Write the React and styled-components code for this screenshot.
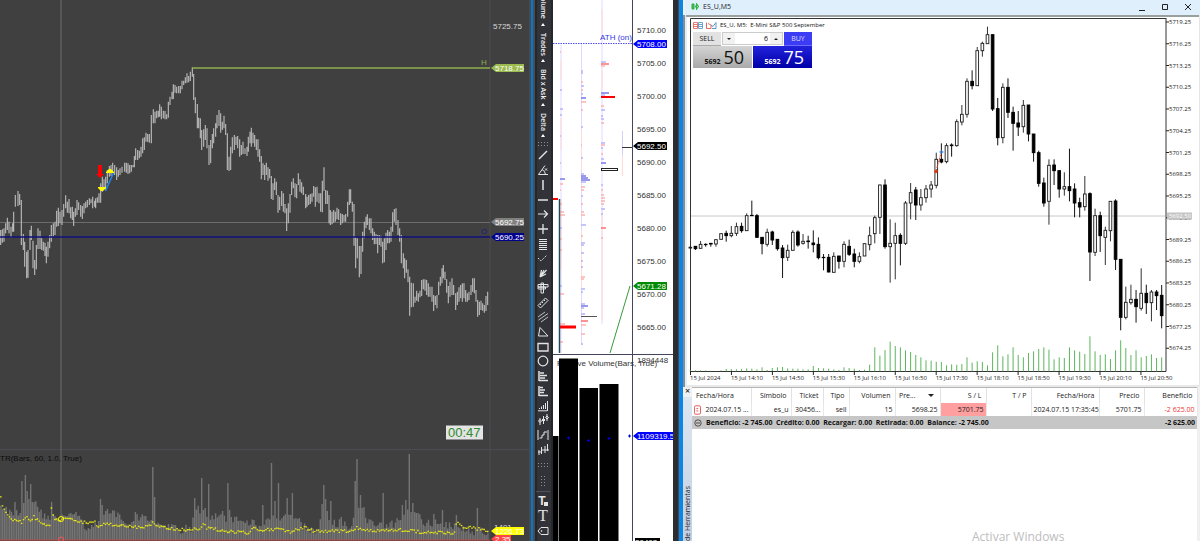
import React from "react";
import styled, { createGlobalStyle, css } from "styled-components";

const sans = `"Liberation Sans", Arial, sans-serif`;
const ui = `"Open Sans", "Noto Sans", sans-serif`;

const GlobalStyle = createGlobalStyle`
  * { box-sizing: border-box; }
  body { margin: 0; background: #404040; overflow: hidden; font-family: ${ui}; }
  button, input { font: inherit; color: inherit; margin: 0; padding: 0; border: 0; background: none; }
`;

/* ---------- data ---------- */

// [x, high, low], three units per pixel, origin at the top of the plot
const BARS_A = [[2,540,585],[7,538,578],[12,535,575],[17,520,550],[22,503,540],[27,515,550],[33,530,563],[38,520,545],[41,485,545],[46,435,470],[54,423,468],[59,432,465],[64,450,585],[70,552,600],[74,575,650],[80,605,685],[84,600,683],[90,540,600],[94,527,570],[99,572,655],[104,630,675],[109,585,658],[114,535,597],[120,542,597],[125,565,600],[130,575,602],[135,578,618],[139,590,640],[144,575,620],[149,555,595],[154,525,575],[160,520,560],[165,515,555],[170,482,530],[175,473,528],[180,485,520],[186,480,525],[191,462,500],[197,436,475],[202,455,488],[207,447,490],[212,472,505],[217,470,510],[221,485,528],[226,475,500],[231,450,495],[236,457,480],[242,465,500],[247,468,507],[252,460,490],[257,455,475],[262,450,472],[268,445,465],[273,448,460],[278,440,475],[284,452,470],[287,445,475],[292,442,458],[297,430,458],[302,400,458],[307,380,425],[312,388,415],[317,380,420],[322,360,400],[328,348,380],[333,345,378],[338,338,370],[344,345,375],[350,352,390],[355,360,380],[360,355,375],[366,350,368],[374,338,365],[379,338,368],[384,340,372],[389,345,370],[394,345,365],[399,345,352],[403,318,352],[407,295,330],[413,300,330],[418,302,325],[423,290,320],[428,265,310],[433,262,300],[438,248,275],[443,252,275],[448,252,278],[454,195,280],[460,178,220],[465,185,220],[470,182,205],[475,182,202],[479,163,200],[484,170,208],[490,182,205],[495,183,208],[500,193,208],[505,155,203],[510,140,165],[516,125,148],[520,103,147],[525,105,128],[530,110,130],[536,108,130],[541,108,130],[546,92,118],[551,92,105],[556,82,100],[561,70,98],[566,78,97],[571,65,93],[577,52,80],[581,72,150],[586,142,190],[592,162,235],[596,203,235],[601,205,265],[605,240,300],[611,238,290],[616,225,270],[621,235,295],[627,285,345],[632,270,340],[637,252,295],[641,235,280],[647,220,260],[651,195,235],[657,180,228],[662,190,248],[667,215,240],[672,197,235],[677,222,255],[682,250,360],[687,320,363],[692,290,360],[697,262,310],[703,255,300],[708,260,285],[713,258,295],[719,268,320],[724,285,315],[729,275,312],[735,295,312],[741,290,318],[745,260,305],[750,245,280],[754,233,290],[759,248,280],[764,255,290],[769,268,300],[774,268,320],[779,298,335],[784,318,388]];
const BARS_B = [[9,340,372],[14,345,390],[19,338,375],[24,352,392],[29,357,385],[34,378,447],[39,400,450],[44,385,420],[49,395,435],[54,435,488],[59,440,480],[65,423,468],[70,430,485],[75,462,490],[80,475,543],[85,460,520],[90,432,488],[95,395,435],[100,385,415],[105,400,442],[110,403,445],[115,370,405],[120,388,425],[125,397,430],[130,410,435],[137,432,475],[141,440,470],[146,435,465],[151,432,462],[156,430,455],[161,408,440],[166,412,470],[171,410,455],[177,430,460],[182,430,485],[187,392,487],[192,352,422],[197,420,462],[202,422,462],[207,435,520],[211,480,525],[216,485,523],[221,480,518],[226,485,515],[231,473,508],[236,478,510],[242,490,525],[247,492,520],[252,495,515],[257,492,515],[263,455,500],[268,418,465],[272,418,460],[277,455,485],[282,462,587],[287,562,655],[292,565,625],[298,588,682],[303,588,672],[308,545,605],[313,515,565],[318,500,535],[322,493,525],[328,505,540],[333,505,550],[338,535,570],[343,545,583],[348,552,582],[353,555,610],[358,555,585],[363,557,590],[368,575,640],[373,565,637],[378,548,600],[383,540,580],[388,545,580],[393,530,575],[398,487,545],[403,477,515],[408,475,525],[414,510,555],[419,535,575],[424,555,640],[430,610,655],[434,625,685],[439,630,668],[444,658,697],[449,680,797],[454,698,772],[460,700,770],[465,740,758],[470,722,752],[475,730,755],[480,722,742],[485,690,738],[490,688,718],[495,688,722],[500,690,735],[505,700,740],[510,710,740],[516,710,755],[521,735,783],[526,738,765],[531,735,775],[536,695,735],[541,680,707],[546,655,700],[550,645,685],[555,665,690],[560,688,728],[565,708,760],[570,695,740],[576,685,735],[581,705,735],[587,730,780],[592,725,765],[597,712,755],[602,705,745],[607,700,755],[612,700,745],[617,720,755],[622,730,755],[627,725,750],[633,705,735],[638,685,725],[643,685,730],[648,720,755],[653,750,800],[658,755,795],[663,752,780],[668,760,782],[673,765,788],[678,738,783],[683,725,765]];
const PRICE_BARS = [...BARS_A, [789,345,375], ...BARS_B.map(([x, h, l]) => [x + 780, h, l])].sort((a, b) => a[0] - b[0]);
const pricePath = PRICE_BARS.map(([x, h, l]) => `M${x} ${h}V${l}`).join("");

const lerp = (pts, x) => {
  for (let i = 1; i < pts.length; i++) {
    if (x <= pts[i][0]) {
      const [x0, y0] = pts[i - 1];
      const [x1, y1] = pts[i];
      return y0 + ((y1 - y0) * (x - x0)) / (x1 - x0);
    }
  }
  return pts[pts.length - 1][1];
};
const noise = (i) => {
  const v = Math.sin(i * 127.1 + 11.7) * 43758.5453;
  return v - Math.floor(v) - 0.5;
};

const VOL_BASE = [[0,500],[2,507],[8,512],[20,512],[22,500],[33,501],[45,517],[60,518],[75,514],[85,526],[98,526],[103,512],[115,514],[130,528],[136,516],[145,519],[160,522],[180,530],[192,528],[195,503],[200,510],[210,518],[225,517],[235,519],[245,526],[252,522],[260,528],[270,518],[280,520],[290,512],[300,526],[318,530],[324,508],[332,522],[350,526],[362,506],[368,520],[380,526],[395,524],[405,512],[416,514],[425,524],[440,524],[455,528],[470,532],[489,532]];
const VOL_SPIKES = [[0,483],[15,502],[22,481],[25,475],[27,491],[30,484],[51,502],[101,499],[103,505],[136,512],[146,516],[152,467],[154,497],[194,498],[202,478],[205,508],[209,484],[222,511],[228,483],[230,510],[262,505],[272,463],[275,501],[278,483],[287,498],[292,493],[299,518],[322,504],[324,485],[326,499],[330,501],[341,517],[355,481],[357,459],[360,495],[363,508],[383,493],[402,505],[405,500],[410,454],[412,503],[417,513],[434,514],[443,510],[456,515],[478,508]];
const volPath = Array.from({ length: 280 }, (_, i) => {
  const x = 1 + i * 1.745;
  const spike = VOL_SPIKES.find(([sx]) => Math.abs(sx - x) < 0.88);
  const y = spike ? spike[1] : lerp(VOL_BASE, x) + noise(i) * 9;
  return `M${x.toFixed(1)} 540V${y.toFixed(1)}`;
}).join("");

const AVG = [[0,498],[2,506],[5,513],[12,520],[22,522],[25,516],[30,521],[33,517],[40,522],[49,527],[50,504],[53,519],[60,520],[66,517],[72,519],[85,523],[94,521],[96,527],[104,524],[115,525],[135,527],[150,526],[152,521],[158,527],[185,530],[200,529],[202,523],[206,528],[225,531],[249,533],[253,527],[260,530],[280,529],[290,532],[304,527],[312,531],[350,531],[356,528],[375,531],[400,530],[420,532],[454,533],[456,522],[462,527],[480,529],[489,531]];
const avgPath = Array.from({ length: 280 }, (_, i) => {
  const x = i * 1.745;
  return `M${x.toFixed(1)} ${(lerp(AVG, x) + noise(i + 900) * 3).toFixed(1)}h1.6`;
}).join("");

// [wickTop, bodyTop, bodyBottom, wickBottom, filled], three units per pixel
const CANDLES = [[198,202,204,206,0],[198,199,206,210,1],[183,193,205,206,0],[190,193,194,200,1],[190,190,192,200,1],[178,179,192,200,0],[160,161,178,179,0],[152,160,167,185,1],[138,160,167,172,0],[128,140,160,168,0],[128,139,152,158,1],[100,107,152,152,0],[62,106,107,107,1],[102,107,172,173,1],[172,172,191,223,1],[146,157,193,200,0],[152,156,180,195,1],[178,178,206,212,1],[195,204,233,294,1],[194,211,232,243,0],[151,157,211,211,0],[151,156,195,200,1],[162,184,190,194,0],[167,183,185,206,1],[151,189,194,217,1],[172,193,233,238,1],[222,232,233,271,1],[222,232,276,277,1],[217,229,277,277,0],[228,228,244,266,1],[184,193,244,262,0],[179,199,223,228,1],[206,222,244,262,1],[217,230,244,250,0],[190,191,228,228,0],[140,167,194,211,0],[107,113,161,190,0],[14,15,112,162,0],[-2,15,200,206,1],[118,190,200,308,0],[128,167,190,298,0],[160,166,190,256,1],[63,69,190,195,0],[9,38,69,118,0],[21,30,75,120,1],[27,53,75,92,0],[15,27,53,68,0],[3,15,27,53,0],[-82,-62,16,25,0],[-110,-62,-54,-50,1],[-110,-103,-55,-50,0],[-110,-105,-103,-70,1],[-182,-175,-103,-100,0],[-225,-197,-174,-164,0],[-305,-296,-197,-187,0],[-329,-296,-283,-272,1],[-399,-388,-283,-283,0],[-415,-410,-388,-370,0],[-460,-436,-409,-409,0],[-436,-436,-213,-207,1],[-246,-214,-127,-104,1],[-290,-278,-127,-110,0],[-305,-278,-203,-186,1],[-220,-203,-170,-88,1],[-207,-171,-159,-132,1],[-240,-224,-160,-142,0],[-225,-225,-138,-116,1],[-138,-138,-82,-55,1],[-88,-82,10,20,1],[-7,9,69,80,1],[-62,-44,64,134,0],[-62,-45,-28,15,1],[-30,-28,27,53,1],[-23,20,27,47,0],[-94,20,32,64,1],[10,27,69,112,1],[53,68,81,112,1],[-12,42,80,92,0],[37,41,216,303,1],[86,107,217,228,0],[95,107,167,216,1],[140,151,172,255,0],[64,64,152,184,0],[58,63,238,270,1],[238,238,412,451,1],[320,367,412,418,0],[314,358,368,374,0],[330,358,380,428,1],[265,340,385,392,0],[314,340,368,402,1],[330,336,368,424,0],[330,336,347,390,1],[315,346,407,445,1]];
const VOLUMES = [571,571,571,571,573,573,571,567,567,568,567,565,566,568,562,570,564,562,561,565,566,566,568,568,558,564,565,566,568,570,562,564,566,570,569,554,502,527,510,485,498,502,511,516,525,532,541,542,545,546,556,553,554,552,532,548,544,546,556,517,496,529,523,502,525,532,519,514,507,502,509,538,532,534,502,511,515,522,469,514,525,523,537,511,481,504,525,511,532,528,523,534,532];
const candleX = (i) => 31 + i * 15.37;

const RIGHT_AXIS = ["5719.25","5716.25","5713.25","5710.25","5707.25","5704.25","5701.25","5698.25","5695.25","5692.25","5689.25","5686.25","5683.25","5680.25","5677.25","5674.25"];
const TIME_AXIS = ["15 Jul 2024","15 Jul 14:10","15 Jul 14:50","15 Jul 15:30","15 Jul 16:10","15 Jul 16:50","15 Jul 17:30","15 Jul 18:10","15 Jul 18:50","15 Jul 19:30","15 Jul 20:10","15 Jul 20:50"];
const MID_AXIS = [["5710.00",30],["5705.00",63],["5700.00",96],["5695.00",129],["5690.00",162],["5685.00",195],["5680.00",228],["5675.00",261],["5670.00",294],["5665.00",327]];

// footprint rows: [column x, y, length, colour, thickness]
const RED = "#ffb0b0";
const BLUE = "#b4b4ff";
const PROFILE = [
  [601,62,5,BLUE],[601,64,8,"#ff7070"],[601,66,4,RED],[601,93,8,"#7a7ae8"],[601,95,4,BLUE],[601,97,14,"#f00",2],
  [601,106,3,RED],[601,110,4,BLUE],[601,116,2,BLUE],[601,119,3,BLUE],[601,123,3,RED],[601,143,4,BLUE],[601,145,4,RED],[601,148,2,BLUE],[601,154,2,RED],[601,159,3,BLUE],[601,163,5,"#7a7ae8"],
  [601,185,2,BLUE],[601,190,2,RED],[601,195,3,RED],[601,198,4,RED],[601,201,4,RED],[601,204,3,RED],[601,209,4,BLUE],[601,214,2,BLUE],[601,228,5,"#ff7070"],[601,238,2,RED],
  [581,71,2,BLUE],[581,73,2,BLUE],[581,82,2,RED],[581,86,3,BLUE],[581,90,2,RED],[581,94,2,BLUE],[581,98,5,"#7a7ae8"],[581,102,5,RED],[581,110,2,RED],[581,127,2,BLUE],[581,145,1,RED],[581,158,2,BLUE],[581,174,3,BLUE],[581,176,5,"#7a7ae8"],[581,178,7,"#7a7ae8"],[581,180,9,"#7a7ae8"],[581,182,5,BLUE],[581,187,4,RED],[581,190,3,RED],[581,196,2,BLUE],[581,204,2,RED],[581,212,3,RED],[581,215,4,RED],[581,225,5,BLUE],[581,236,2,RED],[581,243,4,BLUE],[581,245,3,BLUE],[581,253,3,BLUE],[581,261,2,BLUE],[581,267,2,BLUE],[581,277,4,RED],[581,279,3,RED],[581,289,4,BLUE],[581,292,2,BLUE],[581,304,4,BLUE],[581,306,7,"#7a7ae8"],[581,308,3,BLUE],[581,314,4,BLUE],[581,321,7,"#ff7070"],[581,325,5,RED],[581,334,4,RED],[581,344,2,BLUE],
  [560,52,1,RED],[560,90,2,BLUE],[560,109,3,BLUE],[560,115,2,BLUE],[560,136,1,BLUE],[560,163,1,BLUE],[560,179,5,"#7a7ae8"],[560,184,3,RED],[560,190,1,RED],[560,204,2,RED],[560,212,4,RED],[560,215,5,RED],[560,228,2,BLUE],[560,239,2,RED],[560,250,2,RED],[560,286,2,BLUE],[560,294,4,RED],[560,324,5,RED],[560,327,16,"#f00",3],[560,342,3,RED],
];

/* ---------- shared pieces ---------- */

const ChartSvg = styled.svg`
  display: block;
  width: 100%;
  height: auto;
  font-family: ${(p) => (p.$ui ? ui : sans)};
  font-size: ${(p) => (p.$ui ? 6 : 8)}px;
`;

function PriceTag({ x, y, width, fill, children }) {
  return (
    <g>
      <path d={`M${x} ${y}l5 -4h${width - 5}v8h${5 - width}z`} fill={fill} />
      <text x={x + 4} y={y + 3} fill="#fff">{children}</text>
    </g>
  );
}

/* ---------- layout ---------- */

const Desktop = styled.main`
  display: grid;
  grid-template-columns: minmax(0, 531fr) 22px minmax(0, 120fr) 10px minmax(0, 517fr);
  min-height: 100vh;
`;
const DarkPane = styled.section`
  background: #404040;
  overflow: hidden;
  height: 100vh;
`;
const WhitePane = styled(DarkPane)`
  background: #fff;
`;
const WindowEdge = styled.div`
  background: linear-gradient(to right, #2d2d2f 0 5px, #45484d 5px 6px, #0c86e4 6px 10px);
`;
const Rail = styled.nav`
  display: flex;
  flex-direction: column;
  align-items: center;
  height: 100vh;
  overflow: hidden;
  border-left: 2px solid #0078d7;
  background: linear-gradient(to right, #4a4c50 0 2px, #26272a 2px 4px, #313338 4px 18px, #26272a 18px);
`;
const MenuButton = styled.button`
  writing-mode: vertical-rl;
  display: flex;
  align-items: center;
  justify-content: space-between;
  height: ${(p) => p.$h}px;
  padding: 4px 0 3px;
  flex: none;
  color: #eee;
  font-size: 7px;
  font-weight: 600;
  line-height: 14px;
  white-space: nowrap;
  ${(p) => p.$cut && css`justify-content: flex-end; gap: 4px;`}
`;
const Caret = styled.i`
  width: 0;
  height: 0;
  border: 2px solid transparent;
  border-bottom: 3px solid #fff;
  border-top: 0;
`;
const ToolList = styled.div`
  display: flex;
  flex-direction: column;
  flex: none;
  height: 309px;
`;
const ToolButton = styled.button`
  display: grid;
  place-items: center;
  width: 14px;
  min-height: 14px;
  flex: 1 0 14px;
  color: #e4e4e4;
`;
const TextTools = styled(ToolList)`
  height: 44px;
`;
const RailDivider = styled.hr`
  width: 14px;
  margin: 2px 0;
  border: 0;
  border-top: 1px solid #50525a;
  flex: none;
`;
const Grip = styled.div`
  width: ${(p) => (p.$tall ? 6 : 12)}px;
  height: ${(p) => (p.$tall ? 12 : 6)}px;
  margin: ${(p) => p.$m}px 0;
  flex: none;
  background: radial-gradient(circle, #8b8d92 1px, transparent 1px) 0 0 / 3px 3px;
`;

const TOOLS = {
  line: <path d="M2 10L10 2" strokeWidth="1.5" />,
  angle: <path d="M1.5 10.5H11M1.5 10.5L8 1.5M5 5.5a6 6 0 0 1 3.5 5M8 4.5l2 2m0-2l-2 2" />,
  vline: <path d="M6 1v10" strokeWidth="1.5" />,
  hline: <path d="M1 6h10" strokeWidth="1.5" />,
  arrow: <path d="M1 6h10M7 2.5L10.5 6 7 9.5" strokeWidth="1.2" />,
  cross: <path d="M6 1v10M1 6h10" strokeWidth="1.3" />,
  levels: <path d="M2 1.5h8M2 3.5h8M2 5.5h8M2 7.5h8M2 9.5h8M2 11.5h8" strokeWidth="1.1" />,
  path: <path d="M1 6l3 3 6-6" strokeDasharray="1.5 1" />,
  fork: <path d="M3 10L9.5 3M3 10l1.500-7M3 10L9 7M4 8l3-5" strokeWidth="1.2" />,
  profile: <path d="M1 2.5h10v2.500H1zM1 5h7.500v2H1zM4 1v10h2.500V1z" />,
  ruler: <path d="M1 8.5L8.5 1 11 3.5 3.5 11zM3 7l1 1M5 5l1 1M7 3l1 1" />,
  hatch: <path d="M1 6L8 1M1.5 9L11 2.5M4 11l7-5" strokeWidth=".8" />,
  triangle: <path d="M3 1.5L11 10H1.5z" />,
  rect: <path d="M1 2.5h10v7.5H1z" strokeWidth="1.3" />,
  circle: <circle cx="6" cy="6" r="4.8" strokeWidth="1.2" />,
  prof1: <path d="M2 1v10M3 3h4M3 5.5h7M3 8h5M2 10.5h9" strokeWidth="1.5" />,
  prof2: <path d="M2 1v10M3 2.5h3M3 5h5M3 7.5h4M2 10.5h9" strokeWidth="1.5" />,
  prof3: <path d="M10.5 1v10M8.5 3v6M6.5 5v4M4.5 6.5v2.5M2.5 8v1M1 10.8h9" />,
  candles: <path d="M3 4v7M6.5 2v8M10 0v7M1.5 7l1.5-1.5L4.5 7 3 8.500zM5 6l1.5-1.5L8 6 6.5 7.5zM8.5 3.5L10 2l1.5 1.5L10 5z" />,
  steps: <path d="M1 1v10M11 1v10M2.5 9H5V6h2V3h3" />,
  ticks: <path d="M2 6v5M4.5 3v7M8 2v7M10.5 0v7M1 8h4M4 6h8" />,
};

const Glyph = ({ children }) => (
  <svg width="12" height="12" viewBox="0 0 12 12" fill="none" stroke="currentColor" aria-hidden="true">
    {children}
  </svg>
);

const TextGlyph = styled.span`
  font: 16px / 14px "Liberation Serif", serif;
`;
const LockedGlyph = styled.span`
  display: flex;
  align-items: flex-end;
  font: bold 12px / 13px ${sans};
`;
const Padlock = styled.i`
  width: 4px;
  height: 4px;
  margin: 0 0 2px -2px;
  background: currentColor;
`;

/* ---------- right terminal ---------- */

const Terminal = styled.section`
  display: flex;
  flex-direction: column;
  height: 100vh;
  background: #f0f0f0;
`;
const TitleBar = styled.header`
  display: flex;
  align-items: center;
  gap: 4px;
  height: 15px;
  flex: none;
  margin-left: 2px;
  padding: 0 7px 2px 6px;
  background: #dfeffc;
  color: #222;
  font-size: 7px;
  line-height: 12px;
`;
const WindowButtons = styled.div`
  display: flex;
  gap: 13px;
  margin: 1px 0 0 auto;
  color: #222;
`;
const WindowButton = styled.button`
  display: block;
  width: 10px;
  height: 10px;
  line-height: 0;
`;
const ChartFrame = styled.div`
  position: relative;
  flex: none;
  padding-left: 3px;
  background: linear-gradient(to right, #8b8b8b 0 2px, #dfeffc 2px 4px, #fff 4px);
`;
const ChartHeading = styled.div`
  position: absolute;
  top: 6px;
  left: 10px;
  display: flex;
  align-items: center;
  gap: 3px;
  color: #111;
  font-size: 6px;
  line-height: 9px;
  white-space: pre;
`;
const TradeBox = styled.div`
  position: absolute;
  top: 17px;
  left: 10px;
  display: grid;
  grid-template-columns: 59px 59px;
  grid-template-rows: 14px 22px;
  column-gap: 1px;
`;
const TopRow = styled.div`
  grid-column: 1 / 3;
  display: flex;
  min-width: 0;
`;
const SideButton = styled.button`
  width: 28px;
  height: 14px;
  flex: none;
  font-size: 7px;
  line-height: 13px;
  border-bottom: 1px solid ${(p) => (p.$buy ? "#6b6bff" : "#aaa")};
  background: ${(p) => (p.$buy ? "#3c3cf4" : "#e2e2e2")};
  color: ${(p) => (p.$buy ? "#dcdcff" : "#222")};
`;
const Stepper = styled.div`
  display: flex;
  flex: 1;
  min-width: 0;
  margin: 0 1px 1px;
  border: 1px solid #ccc;
  background: #fff;
`;
const StepButton = styled.button`
  display: grid;
  place-items: center;
  width: 12px;
  flex: none;
  background: #f1f1f1;
`;
const StepArrow = styled.i`
  border: 2px solid transparent;
  ${(p) => (p.$up ? css`border-bottom: 2px solid #222; border-top: 0;` : css`border-top: 2px solid #222; border-bottom: 0;`)}
`;
const LotInput = styled.input`
  flex: 1;
  width: 0;
  min-width: 0;
  padding-right: 2px;
  text-align: right;
  font-size: 7px;
`;
const QuoteButton = styled.button`
  display: flex;
  align-items: baseline;
  justify-content: flex-end;
  gap: 3px;
  padding-right: 8px;
  color: ${(p) => (p.$buy ? "#fff" : "#111")};
  background: ${(p) => (p.$buy ? "linear-gradient(#2222dc, #0000a8)" : "linear-gradient(#d4d4d4, #a9a9a9)")};
`;
const QuoteWhole = styled.b`
  font-size: 7px;
`;
const QuoteTicks = styled.span`
  font-size: 18px;
  line-height: 22px;
`;

const Toolbox = styled.div`
  display: flex;
  flex: 1;
  min-height: 0;
  padding-right: 3px;
`;
const ToolboxTab = styled.div`
  display: flex;
  flex-direction: column;
  justify-content: space-between;
  align-items: center;
  width: 9px;
  flex: none;
  background: linear-gradient(#f0f0f0 0 10px, #dce6f0 10px, #c2d0e2);
`;
const CloseButton = styled.button`
  height: 8px;
  font-size: 9px;
  line-height: 8px;
`;
const TabLabel = styled.span`
  writing-mode: vertical-rl;
  transform: rotate(180deg);
  font-size: 7px;
  line-height: 9px;
  color: #222;
  white-space: nowrap;
`;
const ToolboxBody = styled.div`
  position: relative;
  flex: 1;
  min-width: 0;
  background: #fff;
  border-top: 1px solid #b5b5b5;
`;
const Orders = styled.table`
  width: 100%;
  table-layout: fixed;
  border-collapse: collapse;
  font-size: 7px;
  line-height: 10px;
  color: #222;
`;
const HeadCell = styled.th`
  height: 15px;
  padding: 0 4px;
  font-weight: 400;
  text-align: ${(p) => (p.$left ? "left" : "right")};
  border-right: 1px solid #e2e2e2;
  white-space: nowrap;
`;
const Cell = styled.td`
  height: 13px;
  padding: 0 2px;
  text-align: ${(p) => (p.$left ? "left" : "right")};
  border-right: 1px solid #e8e8e8;
  white-space: nowrap;
  background: ${(p) => (p.$stop ? "#ff9f9f" : "transparent")};
  color: ${(p) => (p.$loss ? "#f03434" : "inherit")};
`;
const CellIcon = styled.span`
  display: flex;
  align-items: center;
  gap: 4px;
`;
const SortedHead = styled.span`
  display: flex;
  align-items: center;
  justify-content: flex-end;
  gap: 12px;
  padding-right: 2px;
`;
const SortMark = styled.i`
  border: 3px solid transparent;
  border-top: 3px solid #222;
  border-bottom: 0;
`;
const TotalCell = styled.td`
  height: 13px;
  padding: 0 2px;
  background: #c6c6c6;
  color: #111;
  font-weight: 700;
  text-align: ${(p) => (p.$right ? "right" : "left")};
  white-space: pre;
`;
const Watermark = styled.div`
  position: absolute;
  left: 280px;
  bottom: -4px;
  color: #bdbdbd;
  font-size: 12px;
  line-height: 16px;
`;

const COLUMNS = [["Fecha/Hora",59],["Símbolo",40],["Ticket",32],["Tipo",26],["Volumen",46],["Pre...",45],["S / L",46],["T / P",45],["Fecha/Hora",68],["Precio",45],["Beneficio",53]];

function PriceChart() {
  return (
    <DarkPane aria-label="Price chart">
      <ChartSvg viewBox="0 0 531 541">
        <rect width="531" height="541" fill="#404040" />
        <path d="M490 0V541M0 449.5H530" stroke="#4a4b54" fill="none" />
        <rect x="529" width="2" height="541" fill="#4a4a4a" />
        <path d={volPath} stroke="#747474" strokeWidth="1.4" />
        <path d="M61 0V541M0 222.5H490" stroke="#6c6c6c" />
        <g transform="translate(0 50) scale(.33333)">
          <path d={pricePath} stroke="#bababa" strokeWidth="3.4" />
        </g>
        <path d="M0 237H490" stroke="#10107c" strokeWidth="1.5" />
        <path d="M192 68H490" stroke="#8fae4c" strokeWidth="1.5" />
        <path d="M105.5 191L113.5 173" stroke="#1e86f0" strokeWidth="1.5" />
        <path d="M98 165h4v9h2l-4 4-4-4h2z" fill="#f00" />
        <path d="M98 187h8v1l-3 3h-2l-3-3zM106 173h8v-1l-3-3h-2l-3 3z" fill="#ff0" />
        <path d={avgPath} stroke="#e6e614" strokeWidth="1.3" />
        <path d="M0 540H490" stroke="#c04a4a" />
        <circle cx="61" cy="519" r="2.5" fill="none" stroke="#ff0" />
        <circle cx="61" cy="539.5" r="2.5" fill="none" stroke="#f55" />
        <text x="0" y="461" fill="#0c0c0c">TR(Bars, 60, 1.0, True)</text>
        <text x="481" y="65" fill="#8fae4c">H</text>
        <text x="481" y="234" fill="#1a1a80">O</text>
        <text x="493" y="29" fill="#d8d8d8">5725.75</text>
        <PriceTag x={491} y={68} width={33} fill="#9bbb4f">5718.75</PriceTag>
        <PriceTag x={491} y={222} width={33} fill="#808080">5692.75</PriceTag>
        <PriceTag x={491} y={237} width={33} fill="#00008b">5690.25</PriceTag>
        <text x="494" y="530" fill="#ddd">1491</text>
        <PriceTag x={491} y={531} width={33} fill="#ff0">1226.73</PriceTag>
        <PriceTag x={491} y={539} width={20} fill="#f44">2.35</PriceTag>
        <rect x="446" y="425.5" width="37" height="14" fill="#e4e4e4" />
        <text x="448" y="437" fontSize="13" fill="#2e8b2e">00:47</text>
      </ChartSvg>
    </DarkPane>
  );
}

function ToolRail() {
  return (
    <Rail aria-label="Drawing tools">
      <MenuButton $h={29} $cut>Volume<Caret /></MenuButton>
      <MenuButton $h={36}>Trades<Caret /></MenuButton>
      <MenuButton $h={44}>Bid x Ask<Caret /></MenuButton>
      <MenuButton $h={31}>Delta<Caret /></MenuButton>
      <Grip $m={1} />
      <ToolList>
        {Object.entries(TOOLS).map(([name, shape]) => (
          <ToolButton key={name} aria-label={name}><Glyph>{shape}</Glyph></ToolButton>
        ))}
      </ToolList>
      <Grip $m={5} />
      <Grip $tall $m={2} />
      <RailDivider />
      <TextTools>
        <ToolButton aria-label="Locked text"><LockedGlyph>T<Padlock /></LockedGlyph></ToolButton>
        <ToolButton aria-label="Text"><TextGlyph>T</TextGlyph></ToolButton>
        <ToolButton aria-label="Label">
          <Glyph><path d="M4 2.5h7v7H4L1 6z" /><circle cx="4.5" cy="6" r=".5" /></Glyph>
        </ToolButton>
      </TextTools>
    </Rail>
  );
}

function ProfileChart() {
  return (
    <WhitePane aria-label="Volume profile">
      <ChartSvg viewBox="553 0 120 541">
        <rect x="553" width="120" height="541" fill="#fff" />
        <path d="M561 45V353M581.5 43V345M602 0V324" stroke="#e2d8ff" />
        <path d="M561 60V80M561 118V150M561 200V270M581.5 130V170M581.5 230V290M602 10V40M602 70V90M602 210V320" stroke="#ffdcdc" />
        {PROFILE.map(([x, y, w, c, h = 1.5], i) => (
          <rect key={i} x={x} y={y - h / 2} width={w} height={h} fill={c} />
        ))}
        <path d="M622.5 131V155" stroke="#d0d0ff" />
        <path d="M622.5 155V176" stroke="#ffdcdc" />
        <path d="M622 147.5H632" stroke="#333" />
        <rect x="601.5" y="168.5" width="16" height="2" fill="#fff" stroke="#222" />
        <path d="M581 316.5H597" stroke="#555" />
        <path d="M553 199H558" stroke="#f00" strokeWidth="2" />
        <path d="M559.5 199V353" stroke="#1d4a60" strokeWidth="1.5" />
        <path d="M630 286L610 353" stroke="#3a9a3a" />
        <path d="M553 43.5H632" stroke="#5050f0" strokeDasharray="1.5 1" />
        <text x="600" y="40" fill="#3434e6">ATH (on)</text>
        <path d="M632.5 0V541M553 354.5H673" stroke="#44445c" fill="none" />
        <text x="557" y="366" fill="#333">Relative Volume(Bars, True)</text>
        <path d="M553 436h5.5v105H553zM559 358.5h19V541h-19zM579.5 388h18.5v153h-18.5zM599.5 384h19v157h-19z" />
        <path d="M567 438h3M568.5 436.5v3M587 440.5h3M588.5 439v3M607.5 438.5h3M609 437v3M628 436h3M629.5 434.5v3" stroke="#00d" />
        <g fill="#333">
          {MID_AXIS.map(([t, y]) => <text key={t} x="637" y={y + 3}>{t}</text>)}
          <text x="637" y="363">1894448</text>
        </g>
        <PriceTag x={633} y={44} width={34} fill="#00f">5708.00</PriceTag>
        <PriceTag x={633} y={146} width={34} fill="#000">5692.50</PriceTag>
        <PriceTag x={633} y={286} width={34} fill="#008a00">5671.28</PriceTag>
        <PriceTag x={633} y={436} width={40} fill="#00f">1109319.5</PriceTag>
        <rect x="635" y="538" width="25" height="3" />
        <text x="635" y="545" fill="#fff">30403</text>
      </ChartSvg>
    </WhitePane>
  );
}

function CandleChart() {
  return (
    <ChartSvg $ui viewBox="686 15 514 372">
      <rect x="690" y="17" width="510" height="368" fill="#fff" />
      <path d="M686 16H1199" stroke="#9a9f9f" strokeWidth="2" />
      <path d="M1199.5 15V387" stroke="#e6e6e6" />
      <path d="M686 386H1200" stroke="#e9e9e9" strokeWidth="2" />
      <path d="M690.5 371.5V18.5H1166M1166 18V371.5" fill="none" stroke="#333" />
      <path d="M690 371.5H1166" stroke="#333" />
      <path d="M691 216H1165" stroke="#c8c8c8" />
      <g transform="translate(680 180) scale(.33333)">
        {VOLUMES.map((y, i) => (
          <path key={i} d={`M${candleX(i)} 574V${y}`} stroke="#5cb55c" strokeWidth="3" />
        ))}
        {CANDLES.map(([a, b, c, d, f], i) => (
          <g key={i} stroke={f ? "#000" : "#222"} strokeWidth="2.8" fill={f ? "#000" : "#fff"}>
            <path d={`M${candleX(i)} ${a}V${d}`} />
            <rect x={candleX(i) - 4} y={b} width="8" height={Math.max(c - b, 1)} />
          </g>
        ))}
      </g>
      <path d="M936 171L941 153" stroke="#f05030" strokeDasharray="2 1" />
      <path d="M936 169.5l2 2-2 2-2-2z" fill="#f03000" />
      <path d="M939.5 152h4M941.5 150v4" stroke="#1464c8" strokeWidth="1.2" />
      <g fill="#222">
        {RIGHT_AXIS.map((t, i) => (
          <React.Fragment key={t}>
            <path d={`M1166 ${22 + i * 21.75}h3`} stroke="#222" />
            <text x="1169" y={24 + i * 21.75}>{t}</text>
          </React.Fragment>
        ))}
        {TIME_AXIS.map((t, i) => (
          <React.Fragment key={t}>
            <path d={`M${690.5 + i * 40.95} 371v4`} stroke="#222" />
            <text x={690 + i * 40.95} y="380">{t}</text>
          </React.Fragment>
        ))}
      </g>
      <rect x="1167" y="212.5" width="25" height="7" fill="#c4c4c4" />
      <text x="1169" y="218" fill="#fff">5692.50</text>
    </ChartSvg>
  );
}

function TradePanel() {
  return (
    <TradeBox>
      <TopRow>
        <SideButton>SELL</SideButton>
        <Stepper>
          <StepButton aria-label="Decrease volume"><StepArrow /></StepButton>
          <LotInput aria-label="Volume" defaultValue="6" />
          <StepButton aria-label="Increase volume"><StepArrow $up /></StepButton>
        </Stepper>
        <SideButton $buy>BUY</SideButton>
      </TopRow>
      <QuoteButton><QuoteWhole>5692</QuoteWhole><QuoteTicks>50</QuoteTicks></QuoteButton>
      <QuoteButton $buy><QuoteWhole>5692</QuoteWhole><QuoteTicks>75</QuoteTicks></QuoteButton>
    </TradeBox>
  );
}

function OrdersTable() {
  return (
    <Orders>
      <colgroup>{COLUMNS.map(([, w], i) => <col key={i} width={w} />)}</colgroup>
      <thead>
        <tr>
          {COLUMNS.map(([t], i) => (
            <HeadCell key={i} scope="col" $left={i === 0}>
              {t === "Pre..." ? <SortedHead>{t}<SortMark /></SortedHead> : t}
            </HeadCell>
          ))}
        </tr>
      </thead>
      <tbody>
        <tr>
          <Cell $left>
            <CellIcon>
              <svg width="8" height="10" viewBox="0 0 8 10" fill="none" stroke="#e05050" aria-hidden="true">
                <rect x=".5" y=".5" width="6.5" height="9" rx="1.5" /><path d="M2.5 3.5h2M2.5 6h2" />
              </svg>
              2024.07.15 ...
            </CellIcon>
          </Cell>
          <Cell>es_u</Cell>
          <Cell>30456...</Cell>
          <Cell>sell</Cell>
          <Cell>15</Cell>
          <Cell>5698.25</Cell>
          <Cell $stop>5701.75</Cell>
          <Cell />
          <Cell>2024.07.15 17:35:45</Cell>
          <Cell>5701.75</Cell>
          <Cell $loss>-2 625.00</Cell>
        </tr>
        <tr>
          <TotalCell colSpan={9}>
            <CellIcon>
              <svg width="8" height="8" viewBox="0 0 8 8" fill="none" stroke="#333" strokeWidth=".8" aria-hidden="true">
                <circle cx="4" cy="4" r="3.2" /><path d="M2 4h4" />
              </svg>
              {"Beneficio: -2 745.00  Crédito: 0.00  Recargar: 0.00  Retirada: 0.00  Balance: -2 745.00"}
            </CellIcon>
          </TotalCell>
          <TotalCell $right colSpan={2}>-2 625.00</TotalCell>
        </tr>
      </tbody>
    </Orders>
  );
}

export default function App() {
  return (
    <>
      <GlobalStyle />
      <Desktop>
        <PriceChart />
        <ToolRail />
        <ProfileChart />
        <WindowEdge />
        <Terminal>
          <TitleBar>
            <svg width="8" height="9" viewBox="0 0 8 9" fill="none" stroke="#35b44a" strokeWidth="1.1" aria-hidden="true">
              <path d="M2 1v7M1 2.5h2v4H1zM5.500 1v7M4.500 4.500L6 2.500l1.500 2L6 6.500z" />
            </svg>
            ES_U,M5
            <WindowButtons>
              <WindowButton aria-label="Minimize">
                <svg width="10" height="10" viewBox="0 0 10 10" stroke="#222"><path d="M2 8.5h6" /></svg>
              </WindowButton>
              <WindowButton aria-label="Maximize">
                <svg width="10" height="10" viewBox="0 0 10 10" fill="none" stroke="#222"><path d="M2.5 2.5h5v5h-5z" /></svg>
              </WindowButton>
              <WindowButton aria-label="Close">
                <svg width="10" height="10" viewBox="0 0 10 10" stroke="#222"><path d="M2 2l6 6M8 2l-6 6" /></svg>
              </WindowButton>
            </WindowButtons>
          </TitleBar>
          <ChartFrame>
            <CandleChart />
            <ChartHeading>
              <svg width="10" height="7" viewBox="0 0 10 7" fill="none" strokeWidth=".8" aria-hidden="true">
                <path d="M.5 .5h4v6h-4zM.5 2.5h4M.5 4.5h4" stroke="#e0584e" /><path d="M5.5 .5h4v6h-4zM5.5 2.5h4M5.5 4.5h4" stroke="#4a90c8" />
              </svg>
              <svg width="11" height="7" viewBox="0 0 11 7" fill="none" strokeWidth=".9" aria-hidden="true">
                <path d="M.5 .5v6h4.5V3L2 1.5" stroke="#e0584e" /><path d="M5 3l2 1.5L10 .5v6H6" stroke="#4a90c8" />
              </svg>
              ES_U, M5:  E-Mini S&amp;P 500 September
            </ChartHeading>
            <TradePanel />
          </ChartFrame>
          <Toolbox>
            <ToolboxTab>
              <CloseButton aria-label="Close toolbox">×</CloseButton>
              <TabLabel>de Herramientas</TabLabel>
            </ToolboxTab>
            <ToolboxBody>
              <OrdersTable />
              <Watermark>Activar Windows</Watermark>
            </ToolboxBody>
          </Toolbox>
        </Terminal>
      </Desktop>
    </>
  );
}
